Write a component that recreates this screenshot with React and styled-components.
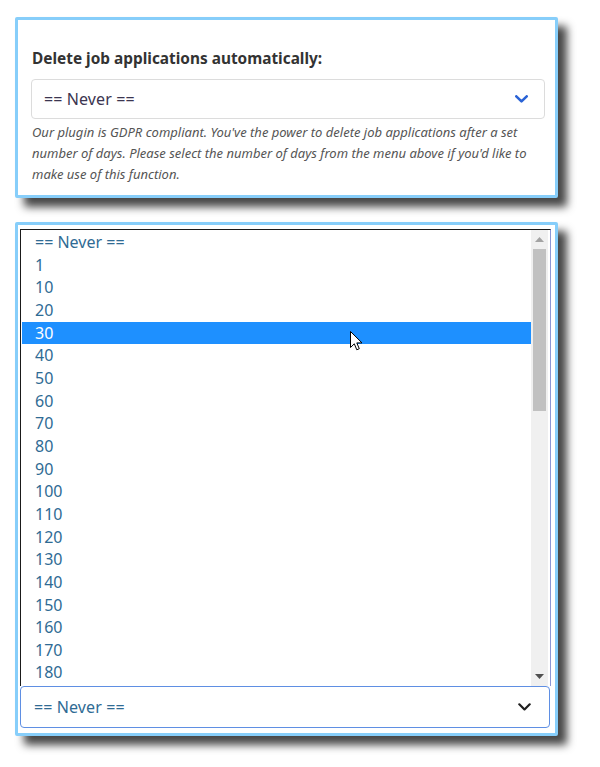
import React from "react";
import styled, { createGlobalStyle } from "styled-components";

const Global = createGlobalStyle`
  html, body { margin: 0; padding: 0; background: #fff; }
  body { font-family: "Noto Sans", "Open Sans", sans-serif; }
  * { box-sizing: border-box; }
`;

const Page = styled.div`
  display: flex;
  flex-direction: column;
  gap: 24px;
  padding: 17px 0 32px 15px;
  width: 600px;
`;

const Panel = styled.section`
  position: relative;
  width: 543px;
  background: #fff;
  border: 3px solid #87cefa;
  border-radius: 2px;
  box-shadow: 9px 9px 9px rgba(0, 0, 0, 0.72);
  padding: ${(p) => p.$pad};
`;

const Label = styled.div`
  font-size: 15.4px;
  line-height: 20px;
  font-weight: 700;
  color: #333;
  margin: 0 0 10px 1px;
`;

const SelectBox = styled.div`
  display: flex;
  align-items: center;
  justify-content: space-between;
  height: ${(p) => p.$h}px;
  width: ${(p) => p.$w}px;
  border: 1px solid ${(p) => p.$border};
  border-radius: 4px;
  background: #fff;
  padding: 0 ${(p) => p.$pr}px 0 ${(p) => p.$pl}px;
  font-size: 16px;
  color: ${(p) => p.$color};
  letter-spacing: 0.1px;
`;

const Help = styled.p`
  margin: 3px 0 0 1px;
  font-size: 13px;
  line-height: 21px;
  font-style: italic;
  color: #555;
`;

const List = styled.div`
  display: flex;
  height: 457px;
  width: 531px;
  border: 1px solid #1a1a1a;
  border-right-color: #8a96d6;
  border-bottom: none;
  background: #fff;
  position: relative;
`;

const Items = styled.div`
  flex: 1;
  padding: 1px 0 0 1px;
`;

const Item = styled.div`
  height: 22.67px;
  line-height: 22.67px;
  padding-left: 13px;
  font-size: 16px;
  color: ${(p) => (p.$active ? "#fff" : "#2f6b94")};
  background: ${(p) => (p.$active ? "#1e90ff" : "transparent")};
`;

const Scrollbar = styled.div`
  width: 17px;
  margin-right: 2px;
  background: #f0f0f0;
  display: flex;
  flex-direction: column;
  align-items: center;
`;

const Arrow = styled.div`
  height: 19px;
  width: 100%;
  display: flex;
  align-items: center;
  justify-content: center;
`;

const Track = styled.div`
  flex: 1;
  width: 100%;
  padding: 0 2px;
`;

const Thumb = styled.div`
  height: 162px;
  background: #c1c1c1;
`;

const Cursor = styled.svg`
  position: absolute;
  left: 329px;
  top: 101px;
  pointer-events: none;
`;

const Chevron = ({ color, w = 13, stroke = 2.6 }) => (
  <svg width={w} height={w * 0.62} viewBox="0 0 13 8" fill="none">
    <path
      d="M1.3 1.3 L6.5 6.4 L11.7 1.3"
      stroke={color}
      strokeWidth={stroke}
      strokeLinecap="round"
      strokeLinejoin="round"
    />
  </svg>
);

const options = ["== Never ==", "1"];
for (let i = 10; i <= 180; i += 10) options.push(String(i));

export default function App() {
  return (
    <>
      <Global />
      <Page>
        <Panel $pad="29px 12px 10px 13px">
          <Label>Delete job applications automatically:</Label>
          <SelectBox $h={40} $w={514} $border="#dcdcdc" $pl={12} $pr={16} $color="#3b3550">
            <span>== Never ==</span>
            <Chevron color="#2a63d6" />
          </SelectBox>
          <Help>
            Our plugin is GDPR compliant. You've the power to delete job applications after a set
            number of days. Please select the number of days from the menu above if you'd like to
            make use of this function.
          </Help>
        </Panel>

        <Panel $pad="4px 4px 5px 2px">
          <List>
            <Items>
              {options.map((o) => (
                <Item key={o} $active={o === "30"}>
                  {o}
                </Item>
              ))}
            </Items>
            <Scrollbar>
              <Arrow>
                <svg width="9" height="5" viewBox="0 0 9 5">
                  <path d="M0 5 L4.5 0 L9 5 Z" fill="#a3a3a3" />
                </svg>
              </Arrow>
              <Track>
                <Thumb />
              </Track>
              <Arrow>
                <svg width="9" height="5" viewBox="0 0 9 5">
                  <path d="M0 0 L9 0 L4.5 5 Z" fill="#505050" />
                </svg>
              </Arrow>
            </Scrollbar>
            <Cursor width="13" height="21" viewBox="0 0 13 21">
              <path
                d="M0.5 0.5 L0.5 16.5 L4.3 12.8 L6.8 18.8 L9.3 17.7 L6.8 11.9 L12 11.9 Z"
                fill="#fff"
                stroke="#000"
                strokeWidth="1"
                strokeLinejoin="round"
              />
            </Cursor>
          </List>
          <SelectBox $h={42} $w={530} $border="#5f8fe3" $pl={13} $pr={18} $color="#2f6b94">
            <span>== Never ==</span>
            <Chevron color="#1f1f1f" w={13} stroke={2.2} />
          </SelectBox>
        </Panel>
      </Page>
    </>
  );
}
